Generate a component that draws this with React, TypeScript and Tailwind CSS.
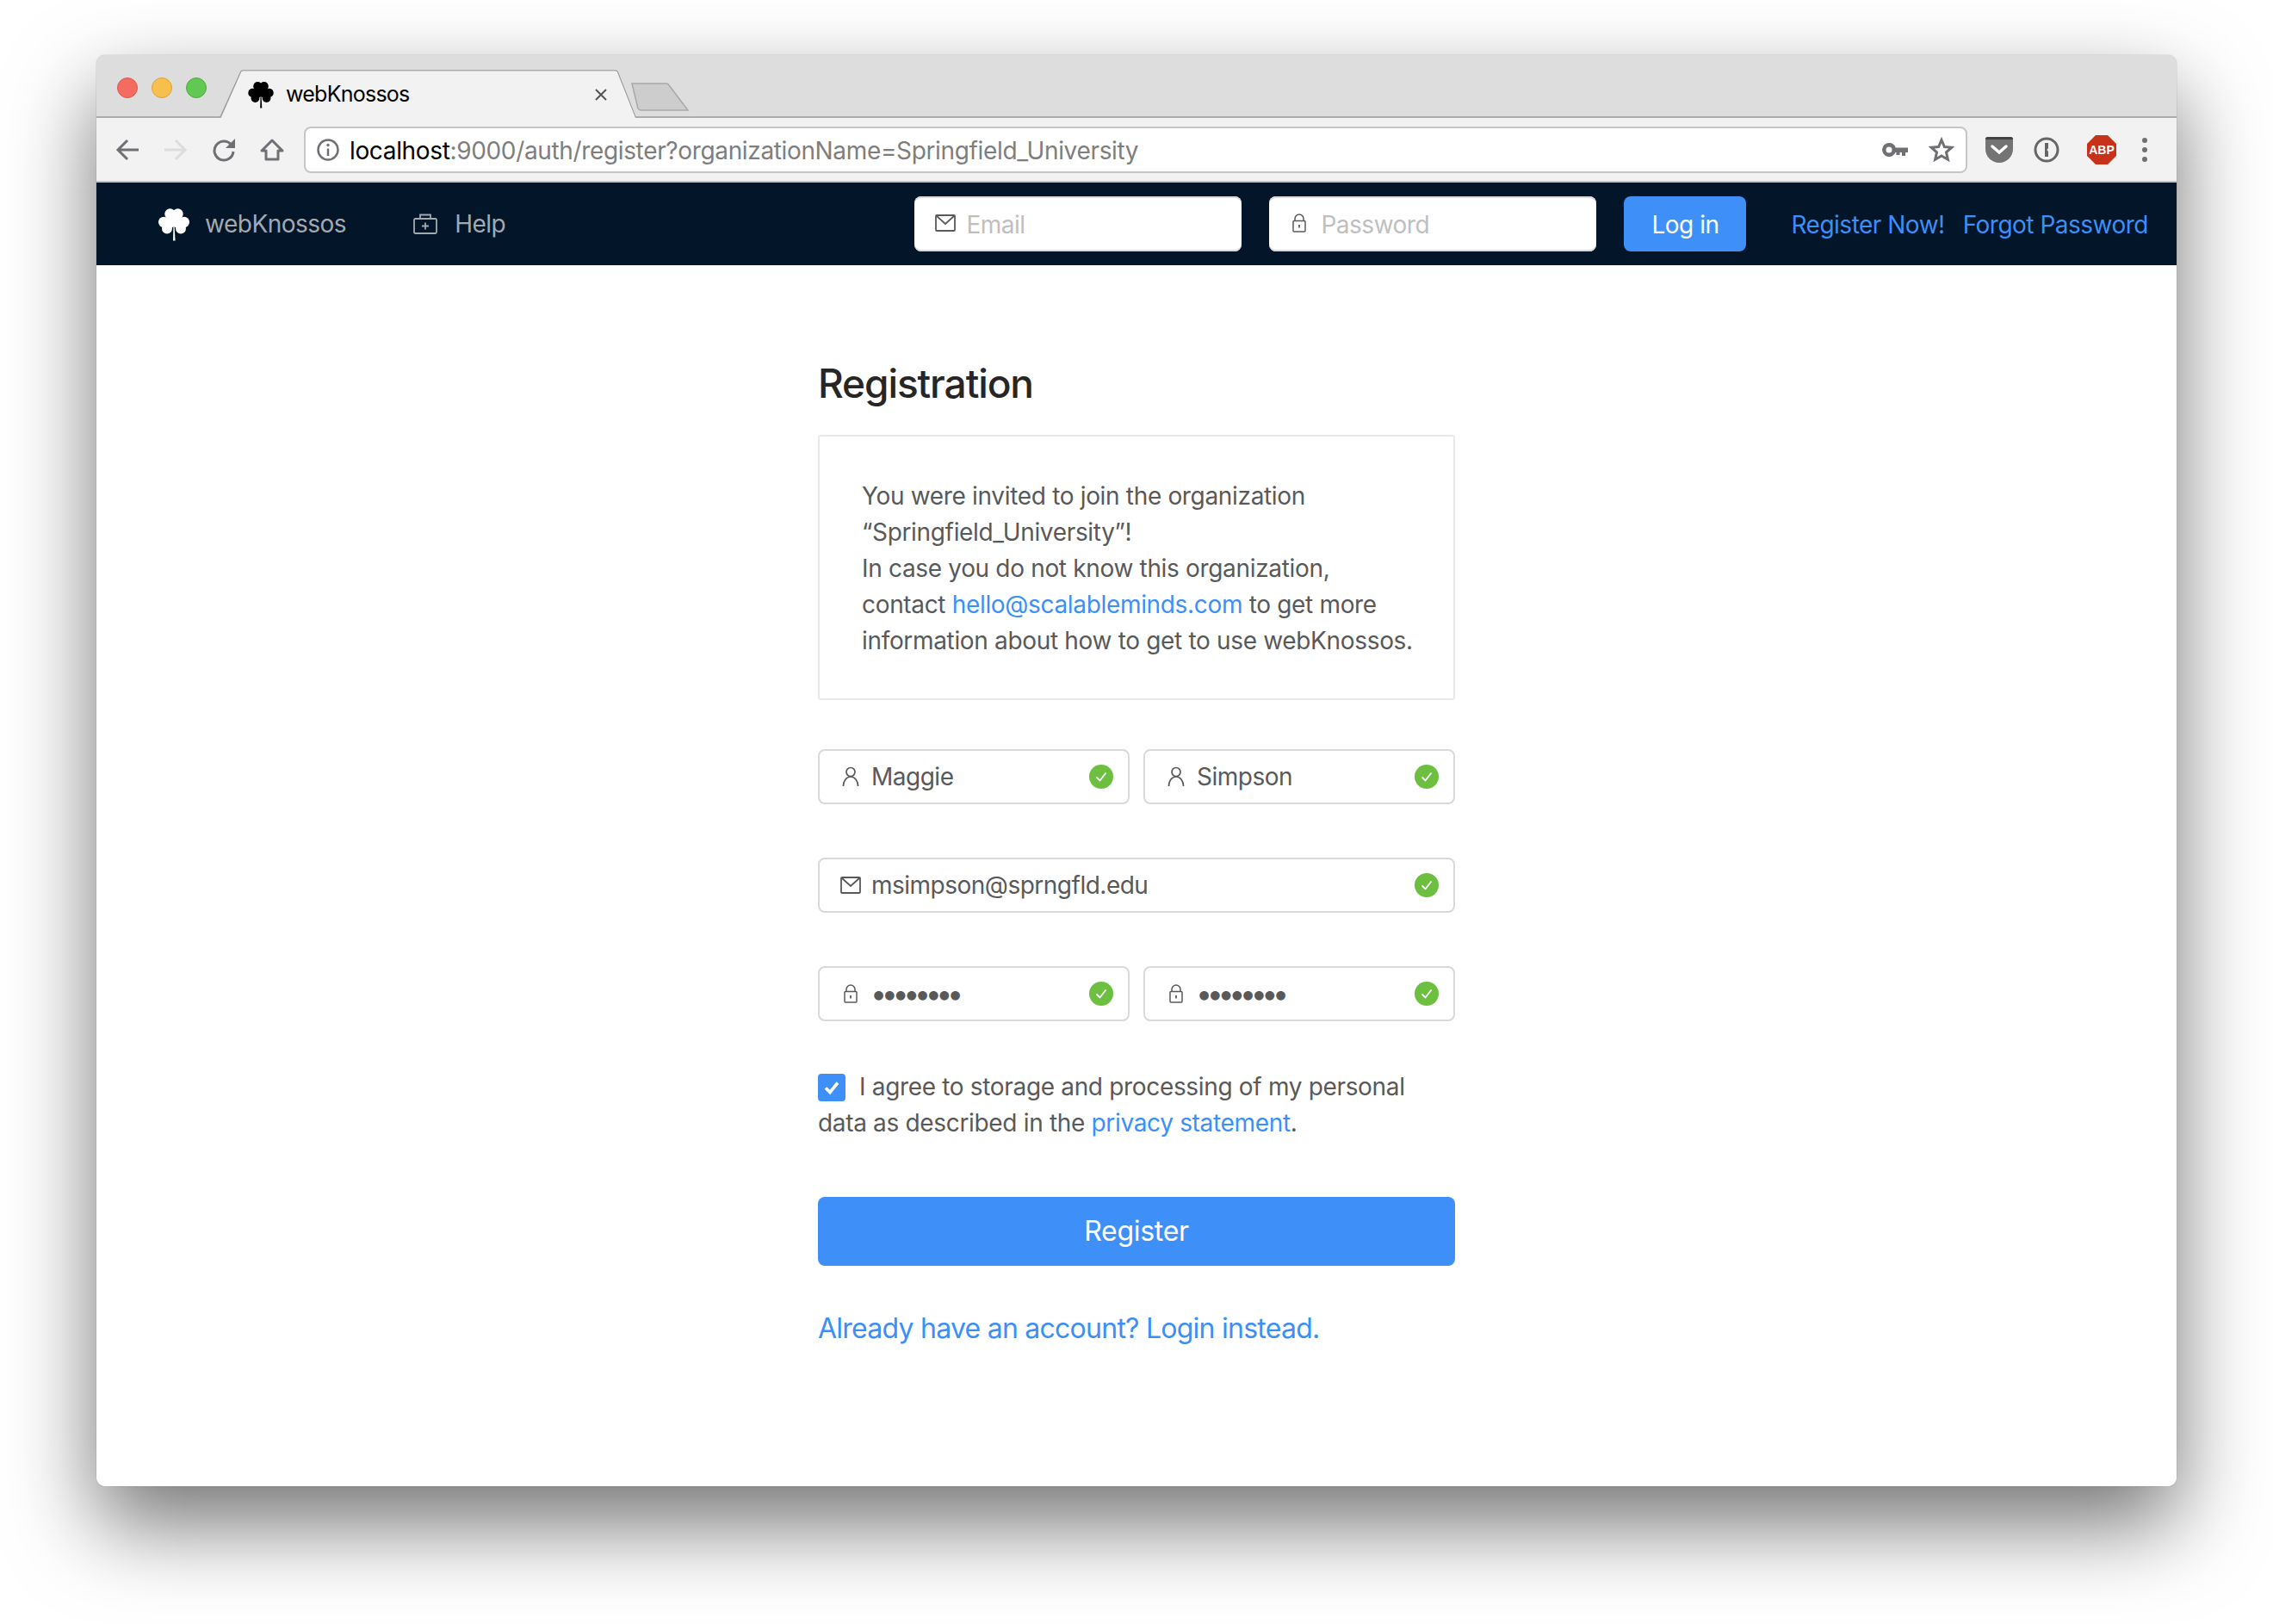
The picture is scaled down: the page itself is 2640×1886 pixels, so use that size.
import React from "react";

const Clover = ({ className }: { className: string }) => (
  <svg viewBox="14 14 36 39" className={className} fill="currentColor">
    <circle cx="27.5" cy="21.500" r="6.200" />
    <circle cx="36.5" cy="21.500" r="6.200" />
    <circle cx="20.2" cy="31" r="6.200" />
    <circle cx="24" cy="38.500" r="6" />
    <circle cx="43.8" cy="31" r="6.200" />
    <circle cx="40" cy="38.500" r="6" />
    <path d="M25 24h14l2 8-4 7-5-3-5 3-4-7z" />
    <path d="M31.4 36h1.2l1 16.500h-2.600z" />
  </svg>
);

const UserIcon = () => (
  <svg viewBox="0 0 20 24" className="h-[24px] w-[20px] text-[#595959]" fill="none" stroke="currentColor" strokeWidth="1.7">
    <circle cx="10" cy="6.500" r="5" />
    <path d="M1.500 23c0-6 3.500-11 8.500-11s8.500 5 8.500 11" />
  </svg>
);

const MailIcon = () => (
  <svg viewBox="0 0 24 20" className="h-[20px] w-[24px] text-[#595959]" fill="none" stroke="currentColor" strokeWidth="1.8">
    <rect x="1" y="1" width="22" height="18" rx="1" />
    <path d="M1.500 1.500 12 11 22.500 1.500" />
  </svg>
);

const LockIcon = () => (
  <svg viewBox="0 0 16 22" className="h-[22px] w-[16px] text-[#595959]" fill="none" stroke="currentColor" strokeWidth="1.5">
    <rect x="1" y="8.500" width="14" height="12.500" rx="1" />
    <path d="M3 8.500V6a5 5 0 0 1 10 0v2.500" />
    <path d="M8 13v3.500" strokeWidth="1.800" />
  </svg>
);

const Check = () => (
  <svg viewBox="0 0 28 28" className="h-[28px] w-[28px]">
    <circle cx="14" cy="14" r="14" fill="#6cbf3f" />
    <path d="M8.500 14.500 12.500 18.500 19.500 9.500" fill="none" stroke="#fff" strokeWidth="1.800" />
  </svg>
);

const Field = ({ icon, text, dots }: { icon: React.ReactNode; text: string; dots?: boolean }) => (
  <div className="flex h-[64px] min-w-0 flex-1 items-center rounded-[8px] border-2 border-[#d9d9d9] bg-white pr-[17px] pl-[23px]">
    <span className="flex w-[26px] justify-center">{icon}</span>
    <span className={dots ? "ml-[10px] flex-1 text-[34px] leading-[40px] tracking-[-6.4px] text-[#595959]" : "ml-[11px] flex-1 text-[28px] tracking-[-0.5px] text-[#595959]"}>{text}</span>
    <Check />
  </div>
);

const Toolbar = () => (
  <div className="flex h-[75px] items-center border-b-2 border-[#c4c4c4] bg-[#f2f2f2]">
    <div className="flex w-[241px] items-center pl-[22px] text-[#6e7074]">
      <svg viewBox="0 0 28 28" className="h-[28px] w-[28px]" fill="none" stroke="currentColor" strokeWidth="3">
        <path d="M27 14H3M14 3 3 14l11 11" />
      </svg>
      <svg viewBox="0 0 28 28" className="ml-[28px] h-[28px] w-[28px] text-[#dcdcdc]" fill="none" stroke="currentColor" strokeWidth="3">
        <path d="M1 14h24M14 3l11 11-11 11" />
      </svg>
      <svg viewBox="0 0 28 28" className="ml-[28px] h-[28px] w-[28px]" fill="none">
        <path d="M22.500 8A11 11 0 1 0 25 16" stroke="currentColor" strokeWidth="3" />
        <path d="M27 1v11H16z" fill="currentColor" />
      </svg>
      <svg viewBox="0 0 28 28" className="ml-[28px] h-[28px] w-[28px]" fill="none" stroke="currentColor" strokeWidth="3">
        <path d="M14 3 2 15h5v10h14V15h5z" strokeLinejoin="round" />
      </svg>
    </div>
    <div className="flex h-[54px] w-[1932px] items-center rounded-[8px] border-2 border-[#c6c6c6] bg-white pr-[13px] pl-[13px]">
      <svg viewBox="0 0 26 26" className="h-[26px] w-[26px] text-[#6e7074]" fill="none" stroke="currentColor" strokeWidth="2.500">
        <circle cx="13" cy="13" r="11.500" />
        <path d="M13 11.500V20" />
        <circle cx="13" cy="7.500" r="1.700" fill="currentColor" stroke="none" />
      </svg>
      <div className="ml-[12px] flex-1 pt-[2px] text-[28px] tracking-[-0.35px] text-[#7e7e7e]">
        <span className="text-black">localhost</span>:9000/auth/register?organizationName=Springfield_University
      </div>
      <svg viewBox="0 0 30 16" className="h-[16px] w-[30px] text-[#6e7074]" fill="currentColor">
        <path fillRule="evenodd" d="M8 0a8 8 0 0 1 7.700 5.500H30V11h-3v4h-4v-4h-2.500v3h-4v-3h-1A8 8 0 1 1 8 0zm0 4.500a3.500 3.500 0 1 0 0 7 3.500 3.500 0 0 0 0-7z" />
      </svg>
      <svg viewBox="0 0 30 30" className="ml-[24px] h-[30px] w-[30px] text-[#6e7074]" fill="none" stroke="currentColor" strokeWidth="3">
        <path d="M15 3.500 18.400 11.500 27 12.200 20.500 17.900 22.400 26.300 15 21.900 7.600 26.300 9.500 17.900 3 12.200 11.600 11.500z" />
      </svg>
    </div>
    <div className="flex flex-1 items-center text-[#6e7074]">
      <svg viewBox="0 0 32 30" className="ml-[21px] h-[30px] w-[32px]">
        <path d="M0 2.500Q0 0 3 0h26q3 0 3 2.500V14a16 16 0 0 1-32 0z" fill="#747474" />
        <path d="M0 2.500Q0 0 3 0h26q3 0 3 2.500V3H0z" fill="#444" />
        <path d="M8 11l8 7 8-7" fill="none" stroke="#fff" strokeWidth="3.500" strokeLinecap="round" />
      </svg>
      <svg viewBox="0 0 30 30" className="ml-[24px] h-[30px] w-[30px]">
        <circle cx="15" cy="15" r="13" fill="#f2f2f2" stroke="#666" strokeWidth="3" />
        <path d="M13 7h4v6l-1.500 2 1.500 2v6h-4z" fill="#666" />
      </svg>
      <svg viewBox="0 0 34 34" className="ml-[32px] h-[34px] w-[34px]">
        <path d="M10 0h14l10 10v14L24 34H10L0 24V10z" fill="#c8321b" />
        <text x="17" y="22" textAnchor="middle" fill="#fff" fontSize="14" fontWeight="700" fontFamily="'Liberation Sans', sans-serif">ABP</text>
      </svg>
      <div className="ml-[30px] flex flex-col gap-[5px]">
        <span className="h-[6px] w-[6px] rounded-full bg-[#6e7074]" />
        <span className="h-[6px] w-[6px] rounded-full bg-[#6e7074]" />
        <span className="h-[6px] w-[6px] rounded-full bg-[#6e7074]" />
      </div>
    </div>
  </div>
);

const TabStrip = () => (
  <div className="relative flex h-[73px] items-start bg-[#dddddd]">
    <div className="mt-[26px] ml-[24px] flex gap-[16px]">
      <span className="h-[24px] w-[24px] rounded-full border border-[#e0564b] bg-[#f46b60]" />
      <span className="h-[24px] w-[24px] rounded-full border border-[#dea032] bg-[#f9bf4e]" />
      <span className="h-[24px] w-[24px] rounded-full border border-[#4fab3b] bg-[#60c853]" />
    </div>
    <svg viewBox="0 0 2416 73" className="absolute inset-0 h-[73px] w-[2416px]" fill="none">
      <path d="M0 72H144L168 19Q169 18 171 18H602Q604 18 605 19L626 72H2416" stroke="#9c9c9c" strokeWidth="1.500" />
      <path d="M145 73 168.500 19Q169 18.500 171 18.500H602Q604 18.500 604.500 19L626 73z" fill="#f2f2f2" />
      <path d="M622 33H662Q664 33 665 35L687 64H633Q630 64 629 62z" fill="#cdcdcd" stroke="#a8a8a8" strokeWidth="1.500" />
    </svg>
    <div className="absolute top-[18px] left-[176px] flex h-[55px] w-[424px] items-center">
      <Clover className="h-[32px] w-[30px] text-black" />
      <span className="ml-[14px] flex-1 text-[25px] tracking-[-0.75px] text-black">webKnossos</span>
      <svg viewBox="0 0 16 16" className="mr-[6px] h-[16px] w-[16px] text-[#555]" fill="none" stroke="currentColor" strokeWidth="2">
        <path d="M2 2l12 12M14 2 2 14" />
      </svg>
    </div>
  </div>
);

const NavBar = () => (
  <div className="flex h-[96px] items-center bg-[#031528] pr-[33px] pl-[72px] text-[28px] tracking-[-0.5px]">
    <Clover className="h-[39px] w-[36px] text-white" />
    <span className="ml-[18px] text-[#a3a9b0]">webKnossos</span>
    <svg viewBox="0 0 28 24" className="ml-[78px] h-[24px] w-[28px] text-[#a3a9b0]" fill="none" stroke="currentColor" strokeWidth="1.800">
      <rect x="1" y="6" width="26" height="17" rx="1.500" />
      <path d="M8 6V1.500h12V6M14 10.500v8M10 14.500h8" />
    </svg>
    <span className="ml-[20px] text-[#a3a9b0]">Help</span>
    <div className="ml-auto flex items-center">
      <div className="flex h-[64px] w-[380px] items-center rounded-[8px] bg-white pl-[24px] shadow-[inset_0_2px_0_#d9d9d9,inset_0_-2px_0_#d9d9d9]">
        <span className="-mt-[2px] flex"><MailIcon /></span>
        <span className="ml-[12px] pt-[2px] text-[#bfbfbf]">Email</span>
      </div>
      <div className="ml-[32px] flex h-[64px] w-[380px] items-center rounded-[8px] bg-white pl-[27px] shadow-[inset_0_2px_0_#d9d9d9,inset_0_-2px_0_#d9d9d9]">
        <span className="-mt-[2px] flex"><LockIcon /></span>
        <span className="ml-[17px] pt-[2px] text-[#bfbfbf]">Password</span>
      </div>
      <div className="ml-[32px] flex h-[64px] w-[142px] items-center justify-center rounded-[8px] bg-[#3e90f8] pt-[2px] text-white">Log in</div>
      <a className="ml-[52px] pt-[2px] text-[#3b8ff7]">Register Now!</a>
      <a className="ml-[21px] pt-[2px] text-[#3b8ff7]">Forgot Password</a>
    </div>
  </div>
);

export default function App() {
  return (
    <div className="h-[1886px] w-[2640px] overflow-hidden bg-white pt-[64px] pl-[112px] font-['Inter',sans-serif]">
      <div className="flex h-[1662px] w-[2416px] flex-col overflow-hidden rounded-[10px] bg-white shadow-[0_44px_100px_rgba(0,0,0,0.55),0_0_1px_rgba(0,0,0,0.6)]">
        <TabStrip />
        <Toolbar />
        <NavBar />
        <main className="flex-1 bg-white pt-[101px]">
          <div className="mx-auto w-[740px] text-[28px] tracking-[-0.3px] text-[#595959]">
            <h1 className="h-[72px] text-[46px] leading-[72px] font-medium tracking-[-1.1px] text-[#262626]">Registration</h1>
            <div className="mt-[24px] h-[308px] rounded-[3px] border-2 border-[#e8e8e8] py-[48px] pr-[24px] pl-[49px] leading-[42px] whitespace-nowrap tracking-[-0.33px]">
              You were invited to join the organization
              <br />
              “Springfield_University”!
              <br />
              In case you do not know this organization,
              <br />
              contact <a className="text-[#3b8ff7]">hello@scalableminds.com</a> to get more
              <br />
              information about how to get to use webKnossos.
            </div>
            <div className="mt-[57px] flex gap-[16px]">
              <Field icon={<UserIcon />} text="Maggie" />
              <Field icon={<UserIcon />} text="Simpson" />
            </div>
            <div className="mt-[62px] flex">
              <Field icon={<MailIcon />} text="msimpson@sprngfld.edu" />
            </div>
            <div className="mt-[62px] flex gap-[16px]">
              <Field icon={<LockIcon />} text="••••••••" dots />
              <Field icon={<LockIcon />} text="••••••••" dots />
            </div>
            <div className="mt-[55px] leading-[42px] tracking-[-0.33px]">
              <span className="mr-[16px] inline-flex h-[32px] w-[32px] translate-y-[1px] items-center justify-center rounded-[4px] bg-[#3e90f8]">
                <svg viewBox="0 0 20 20" className="h-[20px] w-[20px]" fill="none" stroke="#fff" strokeWidth="3.600">
                  <path d="M3 10.500 8 15.500 17 4.500" />
                </svg>
              </span>
              I agree to storage and processing of my personal data as described in the <a className="text-[#3b8ff7]">privacy statement</a>.
            </div>
            <div className="mt-[65px] flex h-[80px] items-center justify-center rounded-[8px] bg-[#3e90f8] text-[32px] text-white">Register</div>
            <div className="mt-[49px] text-[32px] leading-[48px] tracking-[-0.75px] text-[#3b8ff7]">Already have an account? Login instead.</div>
          </div>
        </main>
      </div>
    </div>
  );
}
